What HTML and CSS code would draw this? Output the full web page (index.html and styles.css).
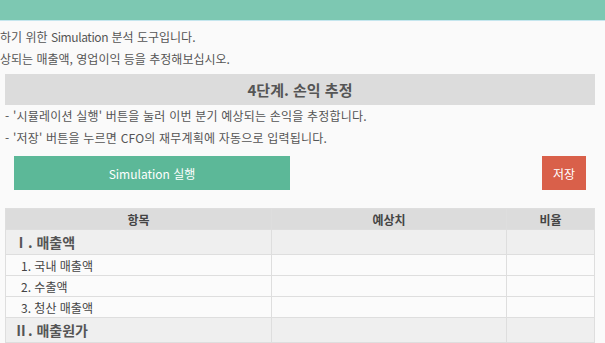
FILE: index.html
```html
<!DOCTYPE html>
<html lang="ko">
<head>
    <meta charset="UTF-8">
    <title>손익 추정</title>
    <link rel="stylesheet" href="styles.css">
</head>
<body>
    <div class="top-bar"></div>

    <div class="content">
        <div class="intro">
            <p>하기 위한 <span class="latin">Simulation</span> 분석 도구입니다.</p>
            <p>상되는 매출액, 영업이익 등을 추정해보십시오.</p>
        </div>

        <div class="step-title">4단계. 손익 추정</div>

        <div class="guide">
            <p>- '시뮬레이션 실행' 버튼을 눌러 이번 분기 예상되는 손익을 추정합니다.</p>
            <p>- '저장' 버튼을 누르면 CFO의 재무계획에 자동으로 입력됩니다.</p>
        </div>

        <div class="actions">
            <button class="button run-btn">Simulation 실행</button>
            <button class="button save-btn">저장</button>
        </div>

        <table class="result-table">
            <thead>
                <tr>
                    <th class="col-item">항목</th>
                    <th class="col-value">예상치</th>
                    <th class="col-rate">비율</th>
                </tr>
            </thead>
            <tbody>
                <tr class="group">
                    <td>Ⅰ. 매출액</td><td></td><td></td>
                </tr>
                <tr class="sub">
                    <td>1. 국내 매출액</td><td></td><td></td>
                </tr>
                <tr class="sub">
                    <td>2. 수출액</td><td></td><td></td>
                </tr>
                <tr class="sub">
                    <td>3. 청산 매출액</td><td></td><td></td>
                </tr>
                <tr class="group">
                    <td>Ⅱ. 매출원가</td><td></td><td></td>
                </tr>
            </tbody>
        </table>
    </div>
</body>
</html>
```

FILE: styles.css
```css
body {
    margin: 0;
    background-color: #fafafa;
    font-family: "Noto Sans CJK KR", "Noto Sans", sans-serif;
    color: #555;
    overflow: hidden;
}

.top-bar {
    height: 20px;
    background-color: #7dc8b2;
    border-bottom: 1px solid #c5e6ee;
}

.content {
    padding: 5px 10px 0 5px;
}

p {
    margin: 0;
}

.intro {
    margin-left: -5px;
    font-size: 12px;
    line-height: 22px;
}

.latin {
    letter-spacing: -0.4px;
}

.step-title {
    margin-top: 4px;
    height: 31px;
    line-height: 31px;
    background-color: #dcdcdc;
    text-align: center;
    font-size: 15px;
    font-weight: bold;
}

.guide {
    font-size: 12px;
    line-height: 22px;
    letter-spacing: 0.2px;
}

.actions {
    display: flex;
    justify-content: space-between;
    margin: 7px 9px 18px 9px;
}

.button {
    height: 34px;
    border: none;
    color: white;
    font-family: inherit;
    font-size: 12px;
    cursor: pointer;
}

.run-btn {
    width: 276px;
    background-color: #5cb898;
}

.save-btn {
    width: 44px;
    background-color: #d9604a;
}

.result-table {
    width: 100%;
    border-collapse: collapse;
    font-size: 12px;
}

.result-table th,
.result-table td {
    border: 1px solid #dedede;
    padding: 0;
}

.result-table th {
    height: 20px;
    background-color: #dcdcdc;
    color: #444;
    font-weight: bold;
}

.col-item {
    width: 265px;
}

.col-rate {
    width: 87px;
}

.group td {
    height: 24px;
    background-color: #efefef;
    font-size: 14px;
    font-weight: bold;
    padding-left: 8px;
}

.sub td {
    height: 20px;
    background-color: #fbfbfb;
    color: #444;
    padding-left: 15px;
}
```
